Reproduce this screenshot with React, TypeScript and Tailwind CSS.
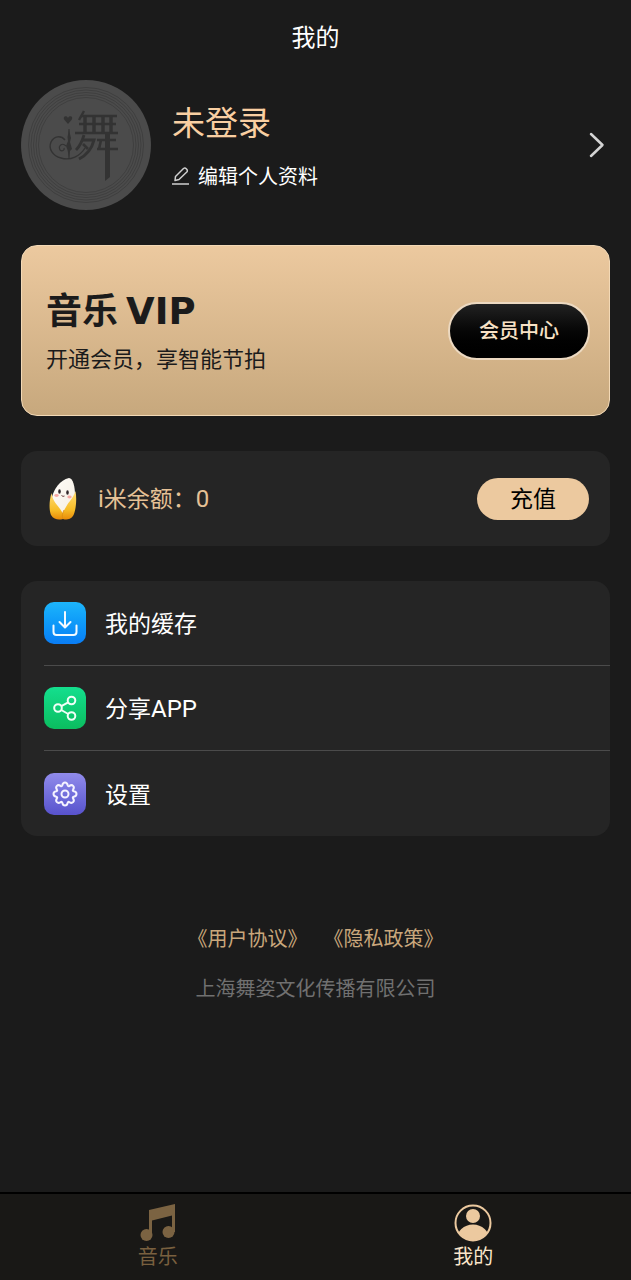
import type { ReactNode } from "react";

function Avatar() {
  return (
    <svg viewBox="0 0 130 130" className="size-[130px] shrink-0" aria-hidden="true">
      <circle cx="65" cy="65" r="65" fill="#4b4b4b" />
      <g fill="none" stroke="#3f3f3f" strokeWidth="1">
        <circle cx="65" cy="65" r="57.5" />
        <circle cx="65" cy="65" r="55" />
        <circle cx="65" cy="65" r="52.5" />
        <circle cx="65" cy="65" r="50" />
        <circle cx="65" cy="65" r="47.5" />
      </g>
      <g fill="none" stroke="#333">
        <g strokeWidth="2.4">
          <path d="M63 31 L58 40" />
          <path d="M60 36 H96" />
          <path d="M58 44 H95" />
          <path d="M54 53 H97" />
        </g>
        <g strokeWidth="3.4">
          <path d="M64 36 V53" />
          <path d="M73 36 V53" />
          <path d="M82 36 V53" />
          <path d="M90 36 V53" />
        </g>
        <path d="M63 55 C61 62 58 67 55 70" strokeWidth="2.8" />
        <path d="M61 60 H73 C71 68 66 75 58 79" strokeWidth="3" />
        <path d="M62 64 L67 69" strokeWidth="2.6" />
        <path d="M76 60 H95 M80 60 L78 69 M76 69 H97" strokeWidth="2.6" />
        <path
          d="M44 60 C40 55 33 56 30 62 C27 69 32 76 40 78 C50 81 59 76 64 68"
          strokeWidth="1.4"
        />
        <path d="M45 66 C41 62 37 66 39 70 C41 72 44 70 43 68" strokeWidth="1.2" />
        <path d="M48 49 V79" strokeWidth="1.2" />
      </g>
      <g fill="#333">
        <path d="M84 54 H89 V97 L84 101 Z" />
        <path d="M47 44 L43.500 40 C41 36 46 35 47 38 C48 35 53 36 50.500 40 Z" />
        <path d="M48 50 L50 58 L49 62 L51 69 L49 71 L48 77 L46.500 70 L45 66 L47 61 L46.500 57 Z" />
      </g>
    </svg>
  );
}

function RiceIcon() {
  return (
    <svg viewBox="0 0 28 44" className="h-11 w-7 shrink-0" aria-hidden="true">
      <defs>
        <linearGradient id="husk" x1="0" y1="0" x2="0" y2="1">
          <stop offset="0" stopColor="#ffdc73" />
          <stop offset="0.65" stopColor="#f7bd27" />
          <stop offset="1" stopColor="#e88a08" />
        </linearGradient>
        <linearGradient id="grain" x1="0" y1="0" x2="1" y2="1">
          <stop offset="0" stopColor="#fffdf8" />
          <stop offset="1" stopColor="#f5eee4" />
        </linearGradient>
      </defs>
      <path d="M20 1 C24 1 26 10 26 18 C26 29 21 38 14 38 C6 38 2 29 3 20 C5 12 11 3 20 1 Z" fill="url(#grain)" />
      <path d="M2.500 16 C0 24 0 33 2 38 C5 43 10 43 14 42 C14 40 15 38 13 35 C10 29 4 26 2.500 16 Z" fill="url(#husk)" />
      <path d="M26.500 14 C28 22 27 34 24 39 C21 43 17 43 14 42 C12 38 14 35 17 30 C20 24 24 22 26.500 14 Z" fill="url(#husk)" />
      <path d="M14 42 C12.500 39 13.500 36 15 33" fill="none" stroke="#d98a10" strokeWidth="0.8" />
      <ellipse cx="10.500" cy="14.500" rx="1.300" ry="2.300" fill="#30252a" />
      <ellipse cx="18.500" cy="15.500" rx="1.300" ry="2.300" fill="#30252a" />
      <ellipse cx="7.500" cy="18.500" rx="2.200" ry="1.400" fill="#f7a9a5" />
      <ellipse cx="20.500" cy="20" rx="2.200" ry="1.400" fill="#f7a9a5" />
      <path d="M12.500 18.500 Q14 20 15.500 19" fill="none" stroke="#6f4444" strokeWidth="1" />
    </svg>
  );
}

function DownloadIcon() {
  return (
    <svg viewBox="0 0 42 42" className="size-[42px]" fill="none" stroke="#f2faff" strokeWidth="2" strokeLinecap="round" strokeLinejoin="round" aria-hidden="true">
      <path d="M21 10 V25 M15.500 20 L21 25.500 L26.500 20 M9.500 23.500 V30 Q9.500 33 12.500 33 H29.500 Q32.500 33 32.500 30 V23.500" />
    </svg>
  );
}

function ShareIcon() {
  return (
    <svg viewBox="0 0 42 42" className="size-[42px]" fill="none" stroke="#f0fff7" strokeWidth="2" aria-hidden="true">
      <circle cx="14" cy="21" r="3.800" />
      <circle cx="27.500" cy="13.500" r="3.800" />
      <circle cx="27.500" cy="29" r="3.800" />
      <path d="M17.300 19.200 L24.200 15.400 M17.300 23 L24.200 27" />
    </svg>
  );
}

function GearIcon() {
  return (
    <svg viewBox="0 0 42 42" className="size-[42px]" fill="none" stroke="#f4f2ff" strokeWidth="2" strokeLinejoin="round" aria-hidden="true">
      <path d="M18.300 12.200 C19 8.600 23 8.600 23.700 12.200 C24 13.300 24.600 13.500 25.400 12.900 C28.400 10.900 31.100 13.600 29.100 16.600 C28.500 17.400 28.700 18 29.800 18.300 C33.400 19 33.400 23 29.800 23.700 C28.700 24 28.500 24.600 29.100 25.400 C31.100 28.400 28.400 31.100 25.400 29.100 C24.600 28.500 24 28.700 23.700 29.800 C23 33.400 19 33.400 18.300 29.800 C18 28.700 17.400 28.500 16.600 29.100 C13.600 31.100 10.900 28.400 12.900 25.400 C13.500 24.600 13.300 24 12.200 23.700 C8.600 23 8.600 19 12.200 18.300 C13.300 18 13.500 17.400 12.900 16.600 C10.900 13.600 13.600 10.900 16.600 12.900 C17.400 13.500 18 13.300 18.300 12.200 Z" />
      <circle cx="21" cy="21" r="3.500" />
    </svg>
  );
}

type Row = { label: ReactNode; tile: string; icon: ReactNode };

function Latin({ children }: { children: ReactNode }) {
  return <span className="font-[Roboto,sans-serif] text-2xl leading-none">{children}</span>;
}

const rows: Row[] = [
  { label: "我的缓存", tile: "from-[#1db5fb] to-[#0b7df5]", icon: <DownloadIcon /> },
  { label: <>分享<Latin>APP</Latin></>, tile: "from-[#14df8e] to-[#0bbd5f]", icon: <ShareIcon /> },
  { label: "设置", tile: "from-[#918beb] to-[#5852cd]", icon: <GearIcon /> },
];

export default function App() {
  return (
    <div className="flex min-h-screen flex-col bg-[#1b1b1b] font-['Noto_Sans_CJK_SC',sans-serif] text-white">
      <header className="flex h-20 items-start justify-center pt-5">
        <h1 className="text-2xl leading-8">我的</h1>
      </header>

      <main className="flex flex-col px-[21px]">
        <section className="flex items-center">
          <Avatar />
          <div className="ml-[21px] flex flex-1 flex-col gap-[17px]">
            <h2 className="text-[33px] leading-[44px] text-[#f9cfa2]">未登录</h2>
            <button type="button" className="flex items-center gap-2 self-start text-xl leading-8">
              <svg viewBox="0 0 18 18" className="size-[18px]" fill="none" stroke="#cfcfcf" strokeWidth="1.5" strokeLinejoin="round" aria-hidden="true">
                <path d="M0 17 H17 M3 13.500 L3.500 9.500 L11.500 1.500 Q13 0.500 14.500 2 Q16 3.500 14.800 5 L7 12.500 Z" />
              </svg>
              <span>编辑个人资料</span>
            </button>
          </div>
          <button type="button" aria-label="个人资料" className="mr-[5px]">
            <svg viewBox="0 0 16 26" className="h-[26px] w-4" fill="none" stroke="#d4d4d4" strokeWidth="2.500" strokeLinecap="round" strokeLinejoin="round" aria-hidden="true">
              <path d="M2 2 L13.500 13 L2 24" />
            </svg>
          </button>
        </section>

        <section className="mt-[35px] flex h-[171px] items-center justify-between rounded-2xl border border-[#f3d9b6] bg-linear-to-b from-[#ecc99f] to-[#c7a87d] pr-[19px] pl-6 text-[#1b1b1b]">
          <div>
            <h2 className="flex items-baseline gap-2 text-4xl leading-[48px] font-bold">
              音乐 <span className="font-['DejaVu_Sans',sans-serif] text-[37px]">VIP</span>
            </h2>
            <p className="text-[22px] leading-[42px]">开通会员，享智能节拍</p>
          </div>
          <button type="button" className="h-[58px] w-[142px] rounded-full border-2 border-[#ecd9c1] bg-linear-to-b from-[#222] to-black pb-0.5 text-xl font-medium text-[#f8e2c6]">
            会员中心
          </button>
        </section>

        <section className="mt-[35px] flex h-[95px] items-center rounded-2xl bg-[#252525] pr-[21px] pl-7">
          <RiceIcon />
          <p className="ml-[21px] flex-1 pb-[3px] text-[23px] leading-8 text-[#e5c196]">
            <Latin>i</Latin>米余额：<Latin>0</Latin>
          </p>
          <button type="button" className="h-[42px] w-28 rounded-full bg-[#ecc99f] pb-1 text-[23px] leading-8 text-black">
            充值
          </button>
        </section>

        <ul className="mt-[35px] rounded-2xl bg-[#252525] pl-[23px]">
          {rows.map((row, index) => (
            <li key={index} className="h-[85px] border-b border-[#4b4b4b] last:border-b-0">
              <button type="button" className="flex size-full items-center gap-[19px] text-left text-[23px] leading-8">
                <span className={`rounded-[10px] bg-linear-to-b ${row.tile}`}>{row.icon}</span>
                <span className="pb-0.5">{row.label}</span>
              </button>
            </li>
          ))}
        </ul>
      </main>

      <footer className="mt-[86px] flex flex-col items-center gap-[18px] pb-8 text-xl leading-8">
        <div className="flex gap-4 text-[#c9a77c]">
          <a href="#terms">《用户协议》</a>
          <a href="#privacy">《隐私政策》</a>
        </div>
        <p className="text-[#707070]">上海舞姿文化传播有限公司</p>
      </footer>

      <nav className="mt-auto flex h-[88px] border-t-2 border-black bg-[#191816] text-xl leading-7">
        <a href="#music" className="flex flex-1 flex-col items-center pt-2.5 text-[#79603f]">
          <svg viewBox="0 0 36 38" className="h-[38px] w-9" fill="#7b6342" aria-hidden="true">
            <path d="M9 6 L35 0 V28 H32 V11.500 L12 16.500 V31 H9 Z" />
            <circle cx="6.500" cy="31" r="6" />
            <circle cx="28.500" cy="28" r="6" />
          </svg>
          音乐
        </a>
        <a href="#me" aria-current="page" className="flex flex-1 flex-col items-center pt-2.5 text-[#fbe6cb]">
          <svg viewBox="0 0 38 38" className="size-[38px]" aria-hidden="true">
            <defs>
              <clipPath id="disc">
                <circle cx="19" cy="19" r="17.500" />
              </clipPath>
            </defs>
            <circle cx="19" cy="12" r="7" fill="#ecc99f" />
            <ellipse cx="19" cy="36" rx="16.500" ry="15.500" fill="#ecc99f" clipPath="url(#disc)" />
            <circle cx="19" cy="19" r="17.500" fill="none" stroke="#ecc99f" strokeWidth="2" />
          </svg>
          我的
        </a>
      </nav>
    </div>
  );
}
